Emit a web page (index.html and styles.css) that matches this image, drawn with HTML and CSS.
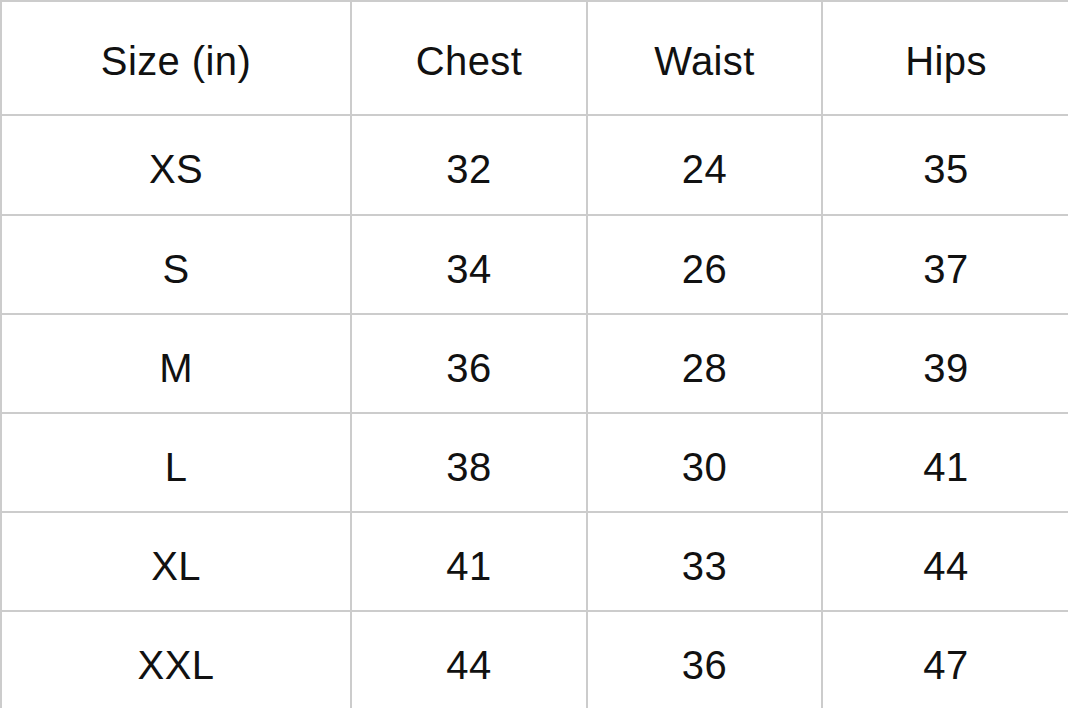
FILE: index.html
```html
<!DOCTYPE html>
<html>
<head>
<meta charset="utf-8">
<link rel="stylesheet" href="styles.css">
</head>
<body>
<div class="chart">
  <div class="cell head">Size (in)</div>
  <div class="cell head">Chest</div>
  <div class="cell head">Waist</div>
  <div class="cell head">Hips</div>

  <div class="cell">XS</div>
  <div class="cell">32</div>
  <div class="cell">24</div>
  <div class="cell">35</div>

  <div class="cell">S</div>
  <div class="cell">34</div>
  <div class="cell">26</div>
  <div class="cell">37</div>

  <div class="cell">M</div>
  <div class="cell">36</div>
  <div class="cell">28</div>
  <div class="cell">39</div>

  <div class="cell">L</div>
  <div class="cell">38</div>
  <div class="cell">30</div>
  <div class="cell">41</div>

  <div class="cell">XL</div>
  <div class="cell">41</div>
  <div class="cell">33</div>
  <div class="cell">44</div>

  <div class="cell">XXL</div>
  <div class="cell">44</div>
  <div class="cell">36</div>
  <div class="cell">47</div>
</div>
</body>
</html>
```
FILE: styles.css
```css
html, body {
  margin: 0;
  padding: 0;
  background: #ffffff;
  overflow: hidden;
}
.chart {
  display: grid;
  grid-template-columns: 348px 234px 233px 260px;
  grid-template-rows: 112px 98px repeat(5, 97px);
  gap: 2px;
  padding: 2px 0 0 2px;
  background: #cccccc;
  width: 1090px;
  font-family: "Liberation Sans", Arial, sans-serif;
  font-size: 40px;
  letter-spacing: 0.4px;
  color: #111111;
}
.cell {
  background: #ffffff;
  display: flex;
  align-items: center;
  justify-content: center;
  padding-top: 9px;
  box-sizing: border-box;
}
.head {
  padding-top: 7px;
}
.cell:nth-child(4n) {
  padding-right: 14px;
}
```
